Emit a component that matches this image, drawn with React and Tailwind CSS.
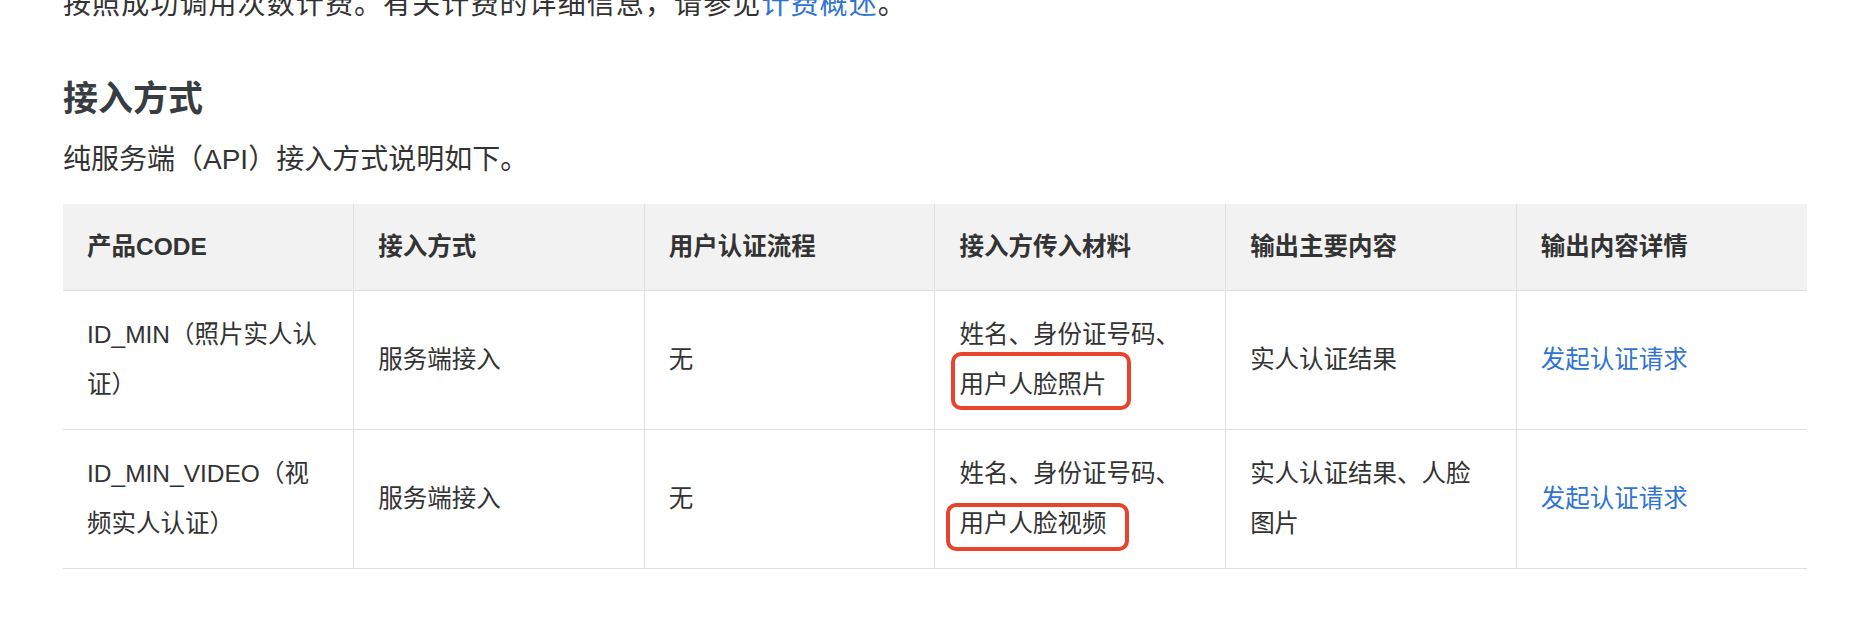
import React from "react";

const rows = [
  {
    code: ["ID_MIN（照片实人认", "证）"],
    mode: "服务端接入",
    flow: "无",
    material: { first: "姓名、身份证号码、", boxed: "用户人脸照片", box: "left-[-8px] right-[-25px] top-[-8px] bottom-[0px]" },
    output: ["实人认证结果"],
    link: "发起认证请求",
  },
  {
    code: ["ID_MIN_VIDEO（视", "频实人认证）"],
    mode: "服务端接入",
    flow: "无",
    material: { first: "姓名、身份证号码、", boxed: "用户人脸视频", box: "left-[-13px] right-[-23px] top-[4px] bottom-[-2px]" },
    output: ["实人认证结果、人脸", "图片"],
    link: "发起认证请求",
  },
];

const headers = ["产品CODE", "接入方式", "用户认证流程", "接入方传入材料", "输出主要内容", "输出内容详情"];

function Lines({ lines }) {
  return lines.map((l, i) => (
    <React.Fragment key={i}>
      {i > 0 && <br />}
      {l}
    </React.Fragment>
  ));
}

export default function App() {
  return (
    <div className="w-[1870px] h-[620px] overflow-hidden bg-white font-['Liberation_Sans','Noto_Sans_CJK_SC',sans-serif] text-[#333333]">
      <div className="px-[63px]">
        <p className="mt-[-16px] text-[28px] leading-[42px] tracking-[1.1px] whitespace-nowrap">
          按照成功调用次数计费。有关计费的详细信息，请参见<a className="text-[#2f74d0]">计费概述</a>。
        </p>
        <h2 className="mt-[48px] text-[35px] leading-[50px] font-bold text-[#373d41]">接入方式</h2>
        <p className="mt-[15px] text-[28px] leading-[42px]">纯服务端（API）接入方式说明如下。</p>
        <table className="mt-[23px] w-[1744px] table-fixed border-collapse text-[24.5px] leading-[50px]">
          <thead>
            <tr className="bg-[#f2f2f2] border-b border-[#e0e0e0]">
              {headers.map((h, i) => (
                <th
                  key={h}
                  className={`px-[24px] py-[18px] text-left font-semibold text-[#333333] ${i > 0 ? "border-l border-[#e0e0e0]" : ""}`}
                >
                  {h}
                </th>
              ))}
            </tr>
          </thead>
          <tbody>
            {rows.map((r, ri) => (
              <tr key={ri} className="border-b border-[#e0e0e0]">
                <td className="px-[24px] py-[19px] align-middle">
                  <Lines lines={r.code} />
                </td>
                <td className="px-[24px] py-[19px] align-middle border-l border-[#e0e0e0]">{r.mode}</td>
                <td className="px-[24px] py-[19px] align-middle border-l border-[#e0e0e0]">{r.flow}</td>
                <td className="px-[24px] py-[19px] align-middle border-l border-[#e0e0e0]">
                  {r.material.first}
                  <br />
                  <span className="relative inline-block leading-[50px]">
                    {r.material.boxed}
                    <span className={`absolute ${r.material.box} border-[4px] border-[#e8432d] rounded-[10px]`} />
                  </span>
                </td>
                <td className="px-[24px] py-[19px] align-middle border-l border-[#e0e0e0]">
                  <Lines lines={r.output} />
                </td>
                <td className="px-[24px] py-[19px] align-middle border-l border-[#e0e0e0]">
                  <a className="text-[#2f74d0]">{r.link}</a>
                </td>
              </tr>
            ))}
          </tbody>
        </table>
      </div>
    </div>
  );
}
